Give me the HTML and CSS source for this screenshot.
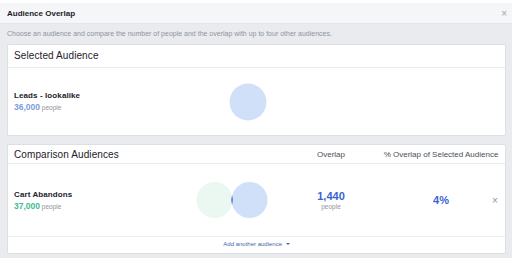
FILE: index.html
```html
<!DOCTYPE html>
<html>
<head>
<meta charset="utf-8">
<link rel="stylesheet" href="styles.css">
</head>
<body>
<div class="top"></div>
<div class="header">
  <span class="title">Audience Overlap</span>
  <span class="close">×</span>
</div>
<div class="content">
  <p class="desc">Choose an audience and compare the number of people and the overlap with up to four other audiences.</p>
  <section class="card">
    <div class="card-head">Selected Audience</div>
    <div class="row-sel">
      <div class="who">
        <div class="name">Leads - lookalike</div>
        <div class="count"><span class="num blue-light">36,000</span> people</div>
      </div>
      <div class="venn venn-single">
        <svg width="38" height="38" viewBox="0 0 38 38"><circle cx="19" cy="19" r="18.5" fill="#cfe0f8"/></svg>
      </div>
    </div>
  </section>
  <section class="card card2">
    <div class="grid head-grid">
      <div class="card-head-text">Comparison Audiences</div>
      <div></div>
      <div class="col-h">Overlap</div>
      <div class="col-h">% Overlap of Selected Audience</div>
      <div></div>
    </div>
    <div class="grid row-cmp">
      <div class="who">
        <div class="name">Cart Abandons</div>
        <div class="count"><span class="num green">37,000</span> people</div>
      </div>
      <div class="venn">
        <svg width="72" height="38" viewBox="0 0 72 38">
          <circle cx="18.5" cy="19" r="18" fill="#eaf8f1"/>
          <circle cx="53.6" cy="19" r="18" fill="#cfe0f8"/>
          <path d="M36.05 15 A18 18 0 0 1 36.05 23 A18 18 0 0 1 36.05 15 Z" fill="#3a6ad2"/>
          <path d="M36.05 14.2 A18 18 0 0 1 36.5 19 A18 18 0 0 1 36.05 23.8 A18 18 0 0 1 35.6 19 A18 18 0 0 1 36.05 14.2 Z" fill="#3a6ad2"/>
        </svg>
      </div>
      <div class="stat">
        <div class="big">1,440</div>
        <div class="sub">people</div>
      </div>
      <div class="stat"><div class="big">4%</div></div>
      <div class="x">×</div>
    </div>
    <div class="foot">Add another audience <span class="caret"></span></div>
  </section>
</div>
</body>
</html>
```
FILE: styles.css
```css
* { box-sizing: border-box; }
html, body { margin: 0; padding: 0; }
body {
  width: 512px;
  height: 258px;
  background: #e9ebee;
  font-family: "Liberation Sans", Arial, sans-serif;
  color: #1d2129;
  overflow: hidden;
}
.top { height: 3px; background: #fff; }
.header {
  height: 21px;
  background: #f5f6f7;
  border-bottom: 1px solid #e5e6e9;
  display: flex;
  align-items: center;
  justify-content: space-between;
  padding: 0 5px 0 7px;
}
.title { font-size: 8px; font-weight: bold; color: #1d2129; }
.close { font-size: 10px; color: #a0a4ab; }
.content { padding: 0 6px 0 7px; }
.desc {
  margin: 0;
  height: 20px;
  line-height: 20px;
  font-size: 7px;
  color: #90949c;
}
.card {
  background: #fff;
  border: 1px solid #dddfe2;
  border-radius: 2px;
}
.card-head {
  height: 23px;
  line-height: 22px;
  padding-left: 6px;
  font-size: 10px;
  border-bottom: 1px solid #e9eaed;
  letter-spacing: 0.1px;
}
.row-sel {
  height: 67px;
  display: flex;
  align-items: center;
  padding-left: 6px;
}
.row-sel .who { width: 182px; }
.who .name { font-size: 8px; font-weight: bold; color: #1d2129; letter-spacing: 0.1px; }
.count { font-size: 6.5px; color: #90949c; margin-top: 2px; }
.num { font-size: 8.5px; font-weight: bold; }
.blue-light { color: #7b9be0; }
.green { color: #42b796; }
.venn { display: flex; align-items: center; width: 72px; }
.venn svg { display: block; }
.venn-single { padding-left: 33px; }
.card2 { margin-top: 8px; }
.grid {
  display: grid;
  grid-template-columns: 182px 72px 126px 94px 14px;
  padding-left: 6px;
}
.head-grid {
  height: 19px;
  align-items: center;
  border-bottom: 1px solid #e9eaed;
}
.card-head-text { font-size: 10px; letter-spacing: 0.1px; }
.col-h {
  font-size: 8px;
  color: #4b4f56;
  display: flex;
  justify-content: center;
  white-space: nowrap;
}
.row-cmp { height: 73px; align-items: center; border-bottom: 1px solid #eceef0; }
.stat { display: flex; flex-direction: column; align-items: center; }
.big { font-size: 11px; font-weight: bold; color: #3a64cf; }
.sub { font-size: 6.5px; color: #90949c; margin-top: 1px; }
.x { font-size: 10px; color: #90949c; text-align: center; }
.foot {
  height: 16px;
  line-height: 15px;
  text-align: center;
  font-size: 6px;
  color: #4267b2;
}
.caret {
  display: inline-block;
  width: 0; height: 0;
  border-left: 2px solid transparent;
  border-right: 2px solid transparent;
  border-top: 2.5px solid #4267b2;
  vertical-align: middle;
  margin-left: 2px;
}
```
